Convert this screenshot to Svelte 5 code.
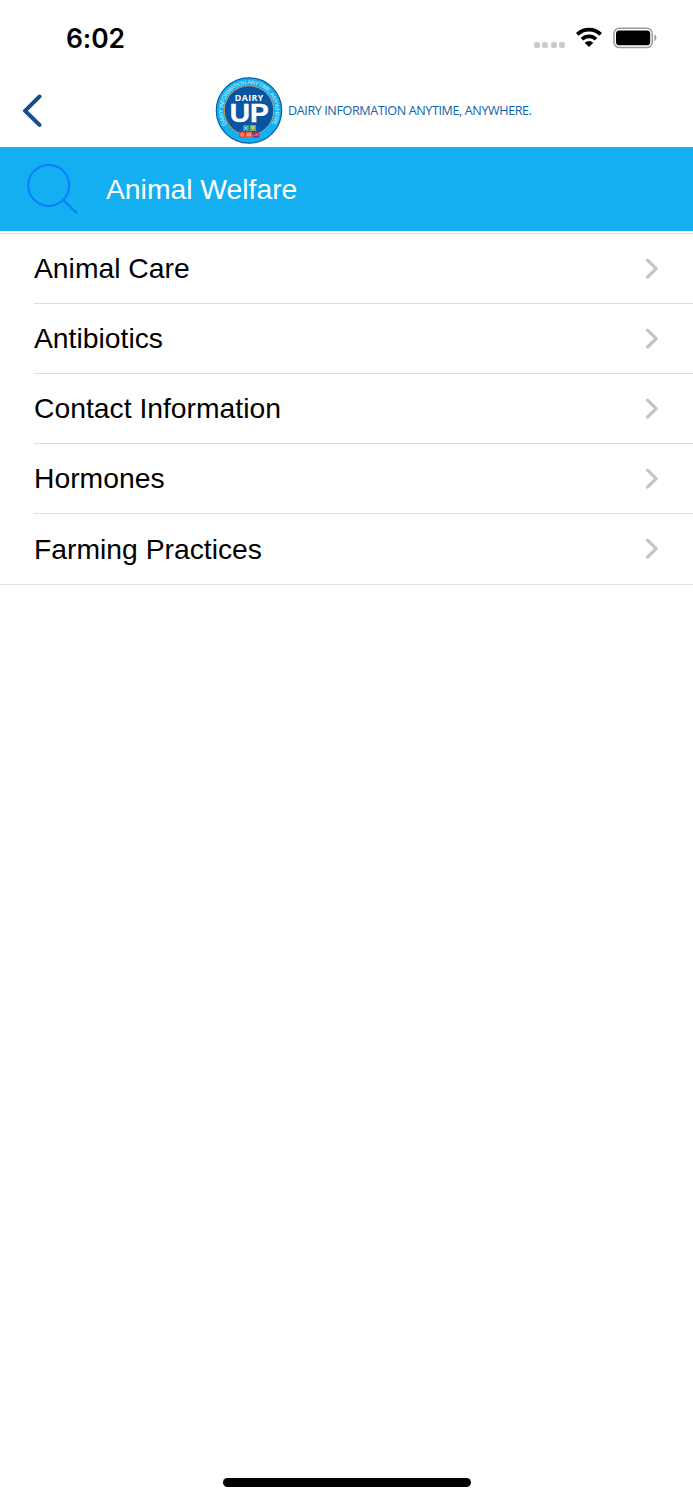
<script>
  let title = "Animal Welfare";

  const topics = [
    "Animal Care",
    "Antibiotics",
    "Contact Information",
    "Hormones",
    "Farming Practices",
  ];
</script>

<div class="screen">
  <div class="status-bar">
    <span class="time">6:02</span>
    <div class="status-icons">
      <div class="signal">
        <i></i><i></i><i></i><i></i>
      </div>
      <svg class="wifi" viewBox="0 0 28 20" width="28" height="20">
        <path
          d="M2.3 7.4a16.6 16.6 0 0 1 23.4 0M7 12.2a9.9 9.9 0 0 1 14 0"
          fill="none"
          stroke="#000"
          stroke-width="3.7"
        />
        <path d="M14 20l-4.3-4.3a6.1 6.1 0 0 1 8.6 0z" fill="#000" />
      </svg>
      <svg class="battery" viewBox="0 0 44 22" width="44" height="22">
        <rect
          x="0.9"
          y="1.2"
          width="38.4"
          height="19.4"
          rx="5.6"
          fill="none"
          stroke="#9a9a9a"
          stroke-width="1.5"
        />
        <rect x="3" y="3.4" width="34.2" height="14.9" rx="3.4" />
        <path d="M41.4 7.5c2.7 1.3 2.7 5.2 0 6.5z" fill="#999" />
      </svg>
    </div>
  </div>

  <header>
    <button class="back" aria-label="Back">
      <svg viewBox="0 0 22 34" width="22" height="34">
        <path
          d="M17.5 2.5L3 16.8L17.5 30.9"
          fill="none"
          stroke="#144f90"
          stroke-width="4"
          stroke-linecap="round"
          stroke-linejoin="round"
        />
      </svg>
    </button>

    <div class="brand">
      <svg class="logo" viewBox="0 0.5 68 68" width="68" height="68">
        <defs>
          <path id="ring" d="M11.8 47.9A26.2 26.2 0 1 1 56.2 47.9" />
        </defs>
        <circle cx="34" cy="34" r="32.7" fill="#12aeef" stroke="#0c5a9f" stroke-width="1.2" />
        <circle cx="34" cy="34" r="24.7" fill="#0756a4" stroke="#c69b62" stroke-width="1" />
        <text class="ring-text">
          <textPath href="#ring" textLength="111">DAIRY INFORMATION ANYTIME, ANYWHERE.</textPath>
        </text>
        <text class="dairy" x="34" y="24.6" text-anchor="middle" textLength="28.5">DAIRY</text>
        <text class="up" x="34.3" y="45.3" text-anchor="middle" textLength="39" lengthAdjust="spacingAndGlyphs">UP</text>
        <rect x="28" y="48.6" width="6.2" height="6" fill="#239fbd" />
        <rect x="34.8" y="48.6" width="6.2" height="6" fill="#76ac46" />
        <rect x="24" y="55.2" width="6.4" height="6" fill="#e34235" />
        <rect x="31" y="55.2" width="6.2" height="6" fill="#f15b2b" />
        <rect x="37.8" y="55.2" width="6.4" height="6" fill="#a42d78" />
        <path
          d="M29.5 50l3 3M32.5 50l-3 3M36.3 50.2h3l-1.5 2.8zM26.2 56.8h2v2.7h-2zM32.4 57.4h3.2v1.7h-3.2zM39.3 59.4l1.5-1.5 1 1 1-2"
          fill="none"
          stroke="#f0dedf"
          stroke-width="0.7"
        />
      </svg>
      <span class="tagline">DAIRY INFORMATION ANYTIME, ANYWHERE.</span>
    </div>
  </header>

  <div class="title-bar">
    <button class="search" aria-label="Search">
      <svg viewBox="0 0 52 52" width="52" height="52">
        <circle cx="21.7" cy="21.4" r="20.5" />
        <path d="M36 35.8L50 49.2" />
      </svg>
    </button>
    <h1>{title}</h1>
  </div>

  <ul class="topics">
    {#each topics as topic}
      <li>
        <a href="#topic">
          <span>{topic}</span>
          <svg viewBox="0 0 14 22" width="14" height="22">
            <path d="M2.6 2.2L11.2 10.6L2.6 19" />
          </svg>
        </a>
      </li>
    {/each}
  </ul>

  <div class="home-indicator"></div>
</div>

<style>
  :global(body) {
    background: #fff;
  }

  .screen {
    display: flex;
    flex-direction: column;
    width: 693px;
    height: 1500px;
    overflow: hidden;
    font-family: "Liberation Sans", Arial, sans-serif;
    color: #000;
  }

  button {
    display: flex;
    padding: 0;
    border: none;
    background: none;
    cursor: pointer;
  }

  svg {
    display: block;
    flex-shrink: 0;
  }

  .status-bar {
    display: flex;
    justify-content: space-between;
    height: 74px;
    flex-shrink: 0;
    padding: 0 36px 0 66px;
    box-sizing: border-box;
  }

  .time {
    padding-top: 22px;
    font-family: Inter, sans-serif;
    font-size: 26.5px;
    font-weight: 600;
    line-height: 33px;
    letter-spacing: -0.1px;
  }

  .status-icons {
    display: flex;
    align-items: flex-start;
    padding-top: 27px;
  }

  .signal {
    display: flex;
    gap: 2.4px;
    padding-top: 15px;
    margin-right: 10px;
  }

  .signal i {
    width: 6px;
    height: 6px;
    border-radius: 2px;
    background: #cbcbcb;
  }

  .battery {
    margin-left: 10px;
  }

  header {
    display: flex;
    align-items: center;
    height: 73px;
    flex-shrink: 0;
    padding-left: 22px;
  }

  .brand {
    display: flex;
    align-items: center;
    margin-left: 171px;
  }

  .ring-text {
    font-size: 5.8px;
    fill: #d8f1fc;
  }

  .dairy {
    font-family: "Open Sans", sans-serif;
    font-size: 8.8px;
    font-weight: 700;
    fill: #fff;
  }

  .up {
    font-size: 25.5px;
    font-weight: 700;
    fill: #fff;
    stroke: #fff;
    stroke-width: 0.4;
  }

  .tagline {
    margin-left: 5px;
    font-family: "Open Sans", sans-serif;
    font-size: 12.6px;
    letter-spacing: -0.41px;
    color: #1262a9;
    white-space: nowrap;
  }

  .title-bar {
    display: flex;
    align-items: center;
    height: 84px;
    flex-shrink: 0;
    padding-left: 27px;
    box-sizing: border-box;
    border-top: 1px solid #3d9fcb;
    background: #14aff1;
  }

  .search svg {
    fill: none;
    stroke: #0a7cff;
    stroke-width: 2;
  }

  h1 {
    margin: 0 0 2px 27px;
    font-size: 28.3px;
    font-weight: 400;
    line-height: 34px;
    color: #fff;
  }

  .topics {
    margin: 2px 0 0;
    padding: 0;
    list-style: none;
    border-top: 1px solid #e1e1e1;
    border-bottom: 1px solid #e1e1e1;
  }

  .topics li {
    padding-left: 34px;
  }

  .topics a {
    display: flex;
    align-items: center;
    justify-content: space-between;
    height: 70.1px;
    padding-right: 34px;
    box-sizing: border-box;
    border-bottom: 1px solid #dedede;
    font-size: 28.3px;
    color: #000;
    text-decoration: none;
  }

  .topics li:last-child a {
    height: 69.4px;
    border-bottom: none;
  }

  .topics path {
    fill: none;
    stroke: #c4c4c7;
    stroke-width: 3.2;
    stroke-linecap: round;
    stroke-linejoin: round;
  }

  .home-indicator {
    align-self: center;
    width: 248px;
    height: 9px;
    margin-top: auto;
    margin-bottom: 13px;
    border-radius: 5px;
    background: #000;
  }
</style>
